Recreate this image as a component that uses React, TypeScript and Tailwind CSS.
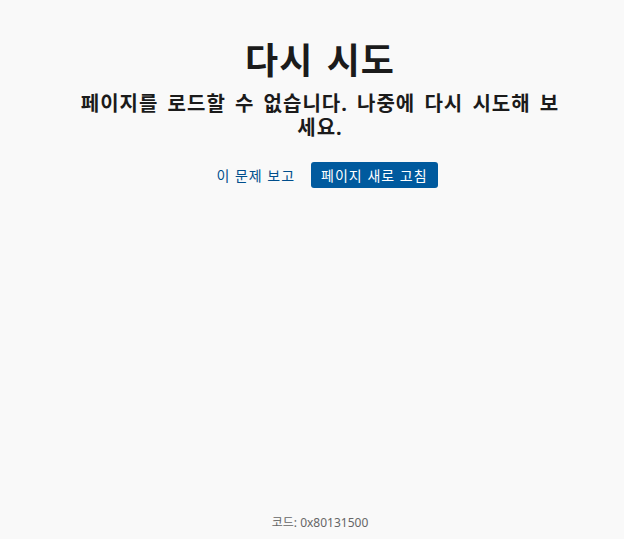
export default function App() {
  return (
    <div
      className="flex min-h-screen flex-col items-center bg-[#f9f9f9] pl-[16px] tracking-[1px] text-[#1b1b1b] [word-spacing:3px]"
      style={{ fontFamily: '"Noto Sans", "Noto Sans CJK KR", sans-serif' }}
    >
      <main className="flex flex-col items-center pt-[37px]">
        <h1 className="text-[36px] font-bold leading-[48px]">다시 시도</h1>
        <p className="mt-[7px] w-[482px] text-center text-[20px] font-bold leading-[24px]">
          페이지를 로드할 수 없습니다. 나중에 다시 시도해 보세요.
        </p>
        <div className="mt-[22px] ml-[14px] flex items-center gap-[16px] text-[14px] [word-spacing:0px]">
          <a href="#" className="text-[#004e8c] hover:underline">
            이 문제 보고
          </a>
          <button
            type="button"
            className="h-[26px] rounded-[3px] bg-[#005a9e] px-[10px] text-white hover:bg-[#004e8c]"
          >
            페이지 새로 고침
          </button>
        </div>
      </main>
      <footer className="mt-auto pb-[8px] text-[12px] leading-[16px] tracking-normal text-[#666666] [word-spacing:0px]">
        코드: 0x80131500
      </footer>
    </div>
  );
}
